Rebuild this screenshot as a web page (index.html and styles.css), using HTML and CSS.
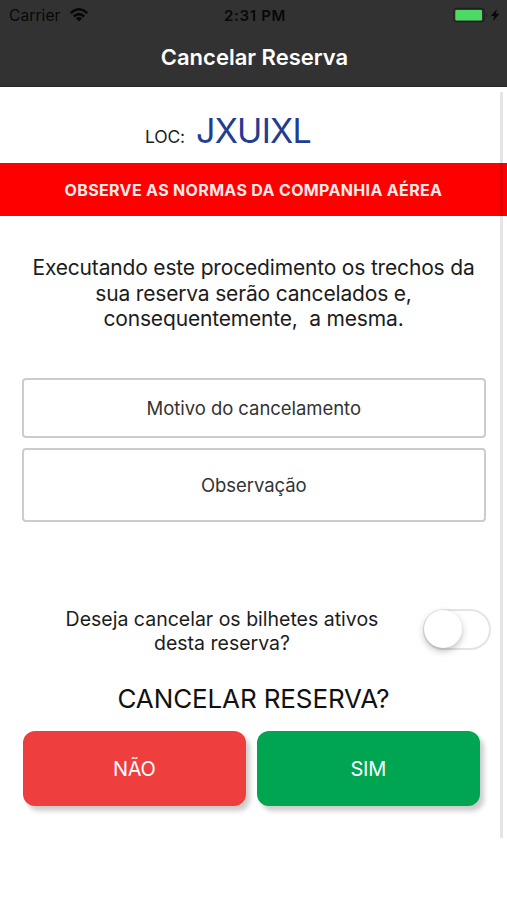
FILE: index.html
```html
<!DOCTYPE html>
<html lang="pt-BR">
<head>
<meta charset="utf-8">
<title>Cancelar Reserva</title>
<link rel="stylesheet" href="styles.css">
</head>
<body>
<header class="header">
  <div class="status">
    <div class="carrier"><span>Carrier</span>
      <svg class="wifi" viewBox="0 0 20 14" width="20" height="14"><g fill="none" stroke="#080808" stroke-width="2.5"><path d="M1.7 5.1Q10-2.6 18.3 5.1"/><path d="M4.8 8.5Q10 3.8 15.2 8.5"/></g><path d="M6.9 10.4Q10 7.7 13.1 10.4L10 13.5Z" fill="#080808"/></svg>
    </div>
    <span class="time">2:31 PM</span>
    <svg class="battery" viewBox="0 0 48 16" width="48" height="16"><rect x=".8" y="1.3" width="30.4" height="13.4" rx="3" fill="none" stroke="#202020" stroke-width="1.2"/><rect x="2.3" y="3" width="26.7" height="10.4" rx="1" fill="#4cd964"/><path d="M33 5.5Q35.6 8 33 10.5Z" fill="#202020"/><path d="M44 2L37.8 9H41.2L40 14L46.5 6.8H43Z" fill="#080808"/></svg>
  </div>
  <h1 class="title">Cancelar Reserva</h1>
</header>
<main class="content">
  <div class="locator"><span class="loc-label">LOC:</span><span class="loc-code">JXUIXL</span></div>
  <div class="banner">OBSERVE AS NORMAS DA COMPANHIA AÉREA</div>
  <p class="notice">Executando este procedimento os trechos da<br>sua reserva serão cancelados e,<br>consequentemente,&nbsp; a mesma.</p>
  <div class="field reason">Motivo do cancelamento</div>
  <div class="field note">Observação</div>
  <div class="tickets">
    <p class="question">Deseja cancelar os bilhetes ativos<br>desta reserva?</p>
    <div class="switch" role="switch" aria-checked="false"><div class="knob"></div></div>
  </div>
  <h2 class="confirm">CANCELAR RESERVA?</h2>
  <div class="actions">
    <button class="btn no">NÃO</button>
    <button class="btn yes">SIM</button>
  </div>
  <div class="scrollbar"></div>
</main>
</body>
</html>
```

FILE: styles.css
```css
* { box-sizing: border-box; }
body { margin: 0; height: 900px; overflow: hidden; background: #fff; color: #1c1c1c; font-family: Inter, "Liberation Sans", sans-serif; }
h1, h2, p { margin: 0; font-weight: 400; }
.header { height: 87px; background: #323232; border-bottom: 1px solid #262626; }
.status { height: 30px; padding: 0 6px 0 9px; display: grid; grid-template-columns: 1fr auto 1fr; align-items: center; font-size: 15.5px; color: #080808; }
.carrier { display: flex; align-items: center; gap: 8px; letter-spacing: .1px; }
.time { font-weight: 600; font-size: 15px; letter-spacing: .7px; }
.battery { justify-self: end; }
.title { height: 56px; padding-left: 2px; line-height: 55px; text-align: center; font-size: 22px; font-weight: 600; color: #fff; }
.content { position: relative; }
.locator { height: 76px; padding: 22px 0 0 145px; display: flex; align-items: baseline; line-height: 44px; }
.loc-label { width: 51px; font-size: 17.5px; letter-spacing: -.2px; }
.loc-code { font-size: 34px; letter-spacing: -.75px; color: #1f3d92; }
.banner { height: 53px; line-height: 54px; background: #f00; color: #ffeaea; text-align: center; font-size: 16px; font-weight: 700; letter-spacing: .34px; }
.notice { height: 162px; padding-top: 39px; text-align: center; font-size: 21px; line-height: 25.7px; letter-spacing: -.17px; }
.field { margin: 0 22px; width: 463.5px; border: 2px solid #ccc; border-radius: 4px; display: flex; align-items: center; justify-content: center; font-size: 18.5px; letter-spacing: -.05px; color: #333; }
.reason { height: 60px; }
.note { height: 74px; margin-top: 10px; }
.tickets { height: 162px; padding: 85px 16px 0 22px; display: flex; justify-content: space-between; }
.question { width: 400px; text-align: center; font-size: 19.5px; line-height: 24px; }
.switch { width: 68px; height: 41px; margin-top: 2px; flex: none; border: 2px solid #e4e4e4; border-radius: 21px; }
.knob { width: 38px; height: 38px; margin: -1px; border-radius: 50%; background: #fff; box-shadow: 0 3px 7px rgba(0,0,0,.26); }
.confirm { height: 47px; line-height: 29px; text-align: center; font-size: 26px; letter-spacing: -.12px; color: #111; }
.actions { display: flex; gap: 10.5px; padding-left: 22.5px; }
.btn { width: 223.5px; height: 75px; border: 0; border-radius: 12px; color: #fff; font: 20px Inter, "Liberation Sans", sans-serif; letter-spacing: -.3px; box-shadow: 4px 5px 5px rgba(0,0,0,.2); }
.no { background: #ee3f3e; }
.yes { background: #00a551; }
.scrollbar { position: absolute; left: 500px; top: 5px; width: 3px; height: 746px; background: rgba(0,0,0,.1); }
```
